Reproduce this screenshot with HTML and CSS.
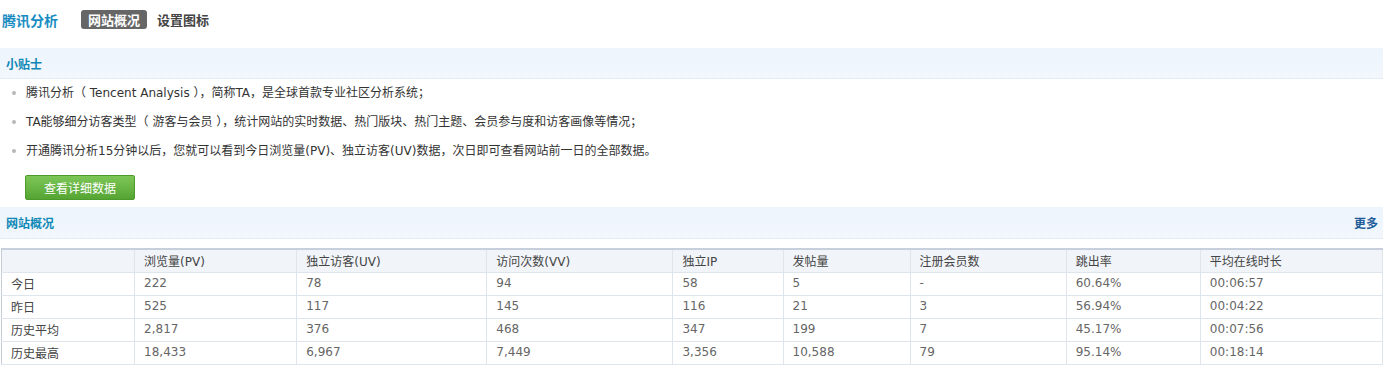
FILE: index.html
```html
<!DOCTYPE html>
<html lang="zh-CN">
<head>
    <meta charset="UTF-8">
    <title>腾讯分析</title>
    <link rel="stylesheet" href="styles.css">
</head>
<body>
    <div class="page">
        <div class="top-nav">
            <span class="brand">腾讯分析</span>
            <a class="tab active">网站概况</a>
            <a class="tab">设置图标</a>
        </div>

        <div class="bar">
            <h3>小贴士</h3>
        </div>
        <ul class="tips">
            <li>腾讯分析（ Tencent Analysis ），简称TA，是全球首款专业社区分析系统；</li>
            <li>TA能够细分访客类型（ 游客与会员 ），统计网站的实时数据、热门版块、热门主题、会员参与度和访客画像等情况；</li>
            <li>开通腾讯分析15分钟以后，您就可以看到今日浏览量(PV)、独立访客(UV)数据，次日即可查看网站前一日的全部数据。</li>
        </ul>
        <button class="btn-green">查看详细数据</button>

        <div class="bar bar-2">
            <h3>网站概况</h3>
            <a class="more">更多</a>
        </div>
        <table class="stats">
            <colgroup>
                <col class="c1"><col class="c2"><col class="c3"><col class="c4"><col class="c5">
                <col class="c6"><col class="c7"><col class="c8"><col class="c9">
            </colgroup>
            <thead>
                <tr>
                    <th></th>
                    <th>浏览量(PV)</th>
                    <th>独立访客(UV)</th>
                    <th>访问次数(VV)</th>
                    <th>独立IP</th>
                    <th>发帖量</th>
                    <th>注册会员数</th>
                    <th>跳出率</th>
                    <th>平均在线时长</th>
                </tr>
            </thead>
            <tbody>
                <tr><td>今日</td><td>222</td><td>78</td><td>94</td><td>58</td><td>5</td><td>-</td><td>60.64%</td><td>00:06:57</td></tr>
                <tr><td>昨日</td><td>525</td><td>117</td><td>145</td><td>116</td><td>21</td><td>3</td><td>56.94%</td><td>00:04:22</td></tr>
                <tr><td>历史平均</td><td>2,817</td><td>376</td><td>468</td><td>347</td><td>199</td><td>7</td><td>45.17%</td><td>00:07:56</td></tr>
                <tr><td>历史最高</td><td>18,433</td><td>6,967</td><td>7,449</td><td>3,356</td><td>10,588</td><td>79</td><td>95.14%</td><td>00:18:14</td></tr>
            </tbody>
        </table>
    </div>
</body>
</html>
```

FILE: styles.css
```css
body, html {
    margin: 0;
    background: #fff;
    font-family: "DejaVu Sans", "Noto Sans CJK SC", sans-serif;
    font-size: 12px;
    color: #333;
}
.page {
    padding-right: 1px;
}
.top-nav {
    display: flex;
    align-items: center;
    height: 19px;
    padding: 10px 0 19px 2px;
}
.brand {
    font-family: "Noto Sans CJK SC", sans-serif;
    font-size: 14px;
    font-weight: bold;
    color: #1a8cc2;
    margin-right: 23px;
}
.tab {
    font-family: "Noto Sans CJK SC", sans-serif;
    font-size: 13px;
    font-weight: bold;
    color: #444;
    padding: 0 7px;
    height: 19px;
    line-height: 19px;
    border-radius: 3px;
    margin-right: 3px;
}
.tab.active {
    background-color: #666;
    color: #fff;
}
.bar {
    display: flex;
    justify-content: space-between;
    align-items: center;
    height: 30px;
    padding: 0 5px 0 6px;
    background: linear-gradient(#edf4fc, #f2f7fd);
    border-bottom: 1px dotted #dbe4ee;
}
.bar h3 {
    margin: 0;
    font-family: "Noto Sans CJK SC", sans-serif;
    font-size: 12px;
    font-weight: bold;
    color: #0e88b6;
}
.bar-2 {
    height: 31px;
    margin-top: 7px;
}
.more {
    font-family: "Noto Sans CJK SC", sans-serif;
    font-weight: bold;
    color: #1f5c99;
}
.tips {
    list-style: none;
    margin: 0;
    padding: 0 0 0 26px;
}
.tips li {
    position: relative;
    height: 29px;
    line-height: 29px;
    color: #333;
}
.tips li::before {
    content: "";
    position: absolute;
    left: -14px;
    top: 12px;
    width: 4px;
    height: 4px;
    border-radius: 50%;
    background: #b8b8b8;
}
.btn-green {
    display: block;
    margin: 9px 0 0 25px;
    width: 110px;
    height: 25px;
    padding: 0;
    border: 1px solid #4c9a2c;
    border-radius: 2px;
    background: linear-gradient(#7cc657, #55a533);
    color: #fff;
    font-family: "Noto Sans CJK SC", sans-serif;
    font-size: 12px;
    cursor: pointer;
}
.stats {
    margin: 9px 0 0 1px;
    width: 1382px;
    table-layout: fixed;
    border-collapse: collapse;
    border: 1px solid #c3cdd9;
    border-top: 2px solid #c6cfdb;
    color: #666;
}
.c1 { width: 133px; }
.c2 { width: 162px; }
.c3 { width: 190px; }
.c4 { width: 186px; }
.c5 { width: 110px; }
.c6 { width: 127px; }
.c7 { width: 156px; }
.c8 { width: 134px; }
.c9 { width: 182px; }
.stats th, .stats td {
    height: 20px;
    padding: 0 9px 2px;
    text-align: left;
    font-weight: normal;
    border-right: 1px solid #dfe5ec;
    border-bottom: 1px solid #dfe5ec;
    white-space: nowrap;
}
.stats th {
    background-color: #f1f4f9;
    color: #444;
}
.stats td:first-child {
    color: #444;
}
```
